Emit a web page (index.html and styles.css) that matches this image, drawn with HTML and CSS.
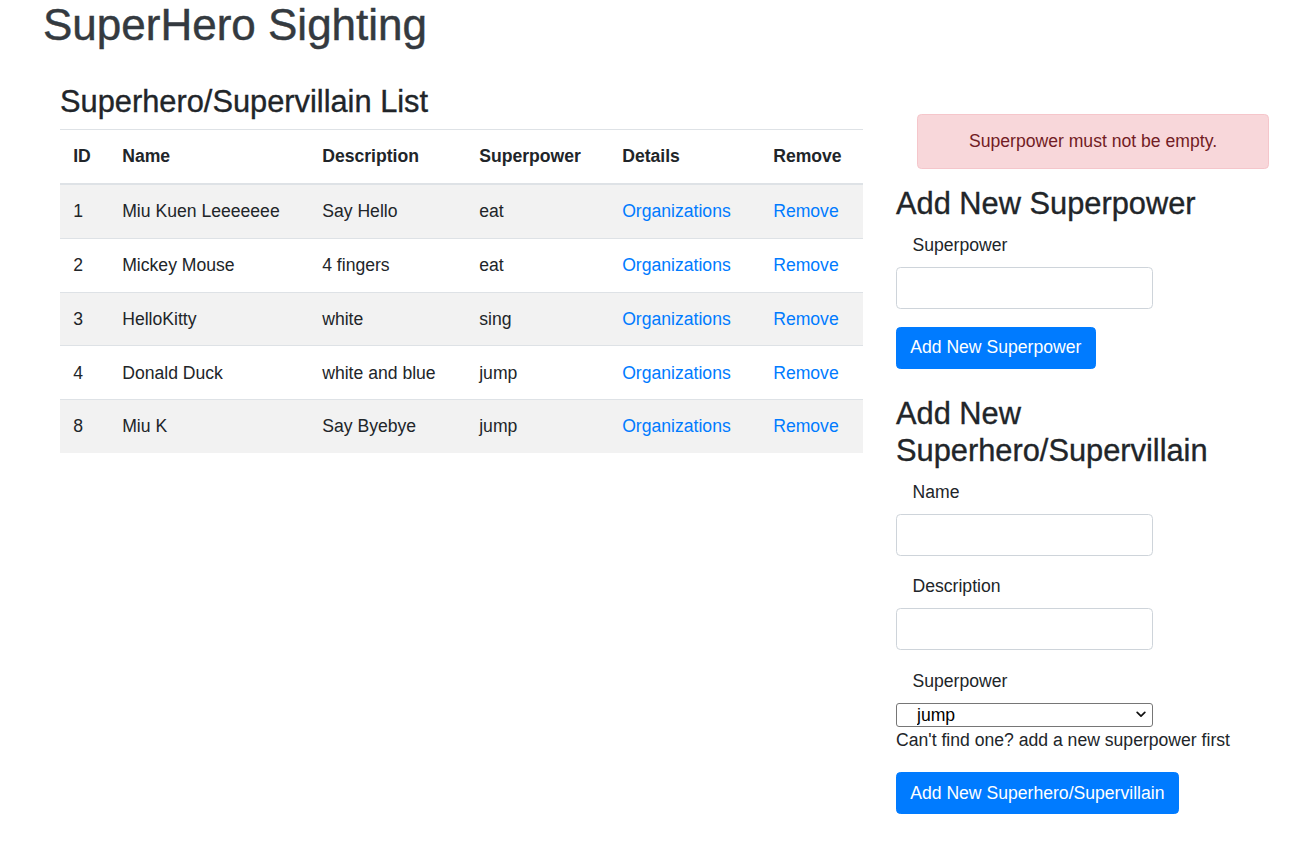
FILE: index.html
```html
<!DOCTYPE html>
<html lang="en">
<head>
<meta charset="utf-8">
<title>SuperHero Sighting</title>
<link rel="stylesheet" href="styles.css">
</head>
<body>
  <h1 class="page-title">SuperHero Sighting</h1>
  <div class="layout">
    <section class="list-col">
      <h3 class="section-title">Superhero/Supervillain List</h3>
      <table class="hero-table">
        <thead>
          <tr>
            <th class="c-id">ID</th>
            <th class="c-name">Name</th>
            <th class="c-desc">Description</th>
            <th class="c-power">Superpower</th>
            <th class="c-details">Details</th>
            <th class="c-remove">Remove</th>
          </tr>
        </thead>
        <tbody>
          <tr>
            <td>1</td><td>Miu Kuen Leeeeeee</td><td>Say Hello</td><td>eat</td>
            <td><a href="#" class="link">Organizations</a></td><td><a href="#" class="link">Remove</a></td>
          </tr>
          <tr>
            <td>2</td><td>Mickey Mouse</td><td>4 fingers</td><td>eat</td>
            <td><a href="#" class="link">Organizations</a></td><td><a href="#" class="link">Remove</a></td>
          </tr>
          <tr>
            <td>3</td><td>HelloKitty</td><td>white</td><td>sing</td>
            <td><a href="#" class="link">Organizations</a></td><td><a href="#" class="link">Remove</a></td>
          </tr>
          <tr>
            <td>4</td><td>Donald Duck</td><td>white and blue</td><td>jump</td>
            <td><a href="#" class="link">Organizations</a></td><td><a href="#" class="link">Remove</a></td>
          </tr>
          <tr>
            <td>8</td><td>Miu K</td><td>Say Byebye</td><td>jump</td>
            <td><a href="#" class="link">Organizations</a></td><td><a href="#" class="link">Remove</a></td>
          </tr>
        </tbody>
      </table>
    </section>

    <aside class="form-col">
      <div class="alert">Superpower must not be empty.</div>

      <form class="power-form">
        <h3 class="section-title">Add New Superpower</h3>
        <div class="form-group">
          <label class="form-label">Superpower</label>
          <input class="form-input" type="text">
        </div>
        <button type="button" class="btn">Add New Superpower</button>
      </form>

      <form class="hero-form">
        <h3 class="section-title">Add New Superhero/Supervillain</h3>
        <div class="form-group">
          <label class="form-label">Name</label>
          <input class="form-input" type="text">
        </div>
        <div class="form-group">
          <label class="form-label">Description</label>
          <input class="form-input" type="text">
        </div>
        <div class="form-group select-group">
          <label class="form-label">Superpower</label>
          <div class="select-wrap">
            <select class="form-select">
              <option>jump</option>
              <option>eat</option>
              <option>sing</option>
            </select>
            <svg class="select-chevron" width="10" height="7" viewBox="0 0 10 7" aria-hidden="true">
              <path d="M1.2 1.4 L5 5.2 L8.8 1.4" fill="none" stroke="#111" stroke-width="1.7" stroke-linecap="round" stroke-linejoin="round"/>
            </svg>
          </div>
          <div class="help-text">Can't find one? add a new superpower first</div>
        </div>
        <button type="button" class="btn">Add New Superhero/Supervillain</button>
      </form>
    </aside>
  </div>
</body>
</html>
```

FILE: styles.css
```css
* {
  box-sizing: border-box;
}

html, body {
  margin: 0;
  padding: 0;
  background: #fff;
}

body {
  font-family: "Liberation Sans", Arial, sans-serif;
  font-size: 17.6px;
  line-height: 26.4px;
  color: #212529;
}

.page-title {
  margin: 0 0 36.5px 43px;
  padding-top: 2px;
  font-size: 44px;
  line-height: 45px;
  font-weight: 500;
  color: #343a40;
  -webkit-text-stroke: 0.45px #343a40;
}

.layout {
  display: flex;
  align-items: flex-start;
  padding-left: 60px;
  gap: 33px;
}

.list-col {
  width: 803px;
  flex: none;
}

.section-title {
  margin: 0 0 8.8px 0;
  font-size: 30.8px;
  line-height: 36.96px;
  font-weight: 500;
  color: #212529;
  -webkit-text-stroke: 0.35px #212529;
}

.hero-table {
  width: 803px;
  border-collapse: collapse;
  table-layout: fixed;
}

.hero-table th,
.hero-table td {
  padding: 13.2px 13.2px;
  text-align: left;
  border-top: 1px solid #dee2e6;
  white-space: nowrap;
  vertical-align: top;
}

.hero-table th {
  font-weight: 700;
  vertical-align: bottom;
  border-bottom: 2px solid #dee2e6;
}

.hero-table tbody tr:nth-child(odd) {
  background: #f2f2f2;
}

.c-id { width: 49px; }
.c-name { width: 200px; }
.c-desc { width: 157px; }
.c-power { width: 143px; }
.c-details { width: 151px; }
.c-remove { width: 103px; }

.link {
  color: #007bff;
  text-decoration: none;
}

.form-col {
  width: 373px;
  flex: none;
}

.alert {
  margin: 30.5px 0 17.6px 21px;
  width: 352px;
  padding: 13.2px 22px;
  border: 1px solid #f5c6cb;
  border-radius: 4.4px;
  background: #f8d7da;
  color: #721c24;
  text-align: center;
}

.power-form {
  margin: 0 0 27.3px 0;
}

.form-group {
  margin-bottom: 17.6px;
}

.form-label {
  display: block;
  padding-left: 16.5px;
  margin-bottom: 8.8px;
}

.form-input {
  display: block;
  width: 257px;
  height: 41.8px;
  padding: 6.6px 13.2px;
  font-family: inherit;
  font-size: 17.6px;
  color: #495057;
  background: #fff;
  border: 1px solid #ced4da;
  border-radius: 4.4px;
}

.select-group {
  margin-bottom: 18.9px;
}

.select-wrap {
  position: relative;
  width: 257px;
  height: 24px;
}

.form-select {
  display: block;
  width: 257px;
  height: 24px;
  padding: 0 24px 0 20px;
  font-family: inherit;
  font-size: 17.6px;
  line-height: 22px;
  color: #000;
  background: #fff;
  border: 1px solid #767676;
  border-radius: 3px;
  -webkit-appearance: none;
  appearance: none;
}

.select-chevron {
  position: absolute;
  right: 7px;
  top: 8px;
  pointer-events: none;
}

.help-text {
  color: #212529;
}

.btn {
  display: inline-block;
  height: 41.8px;
  padding: 6.6px 13.2px;
  font-family: inherit;
  font-size: 17.6px;
  line-height: 26.4px;
  font-weight: 400;
  color: #fff;
  background: #007bff;
  border: 1px solid #007bff;
  border-radius: 4.4px;
  cursor: pointer;
}
```
